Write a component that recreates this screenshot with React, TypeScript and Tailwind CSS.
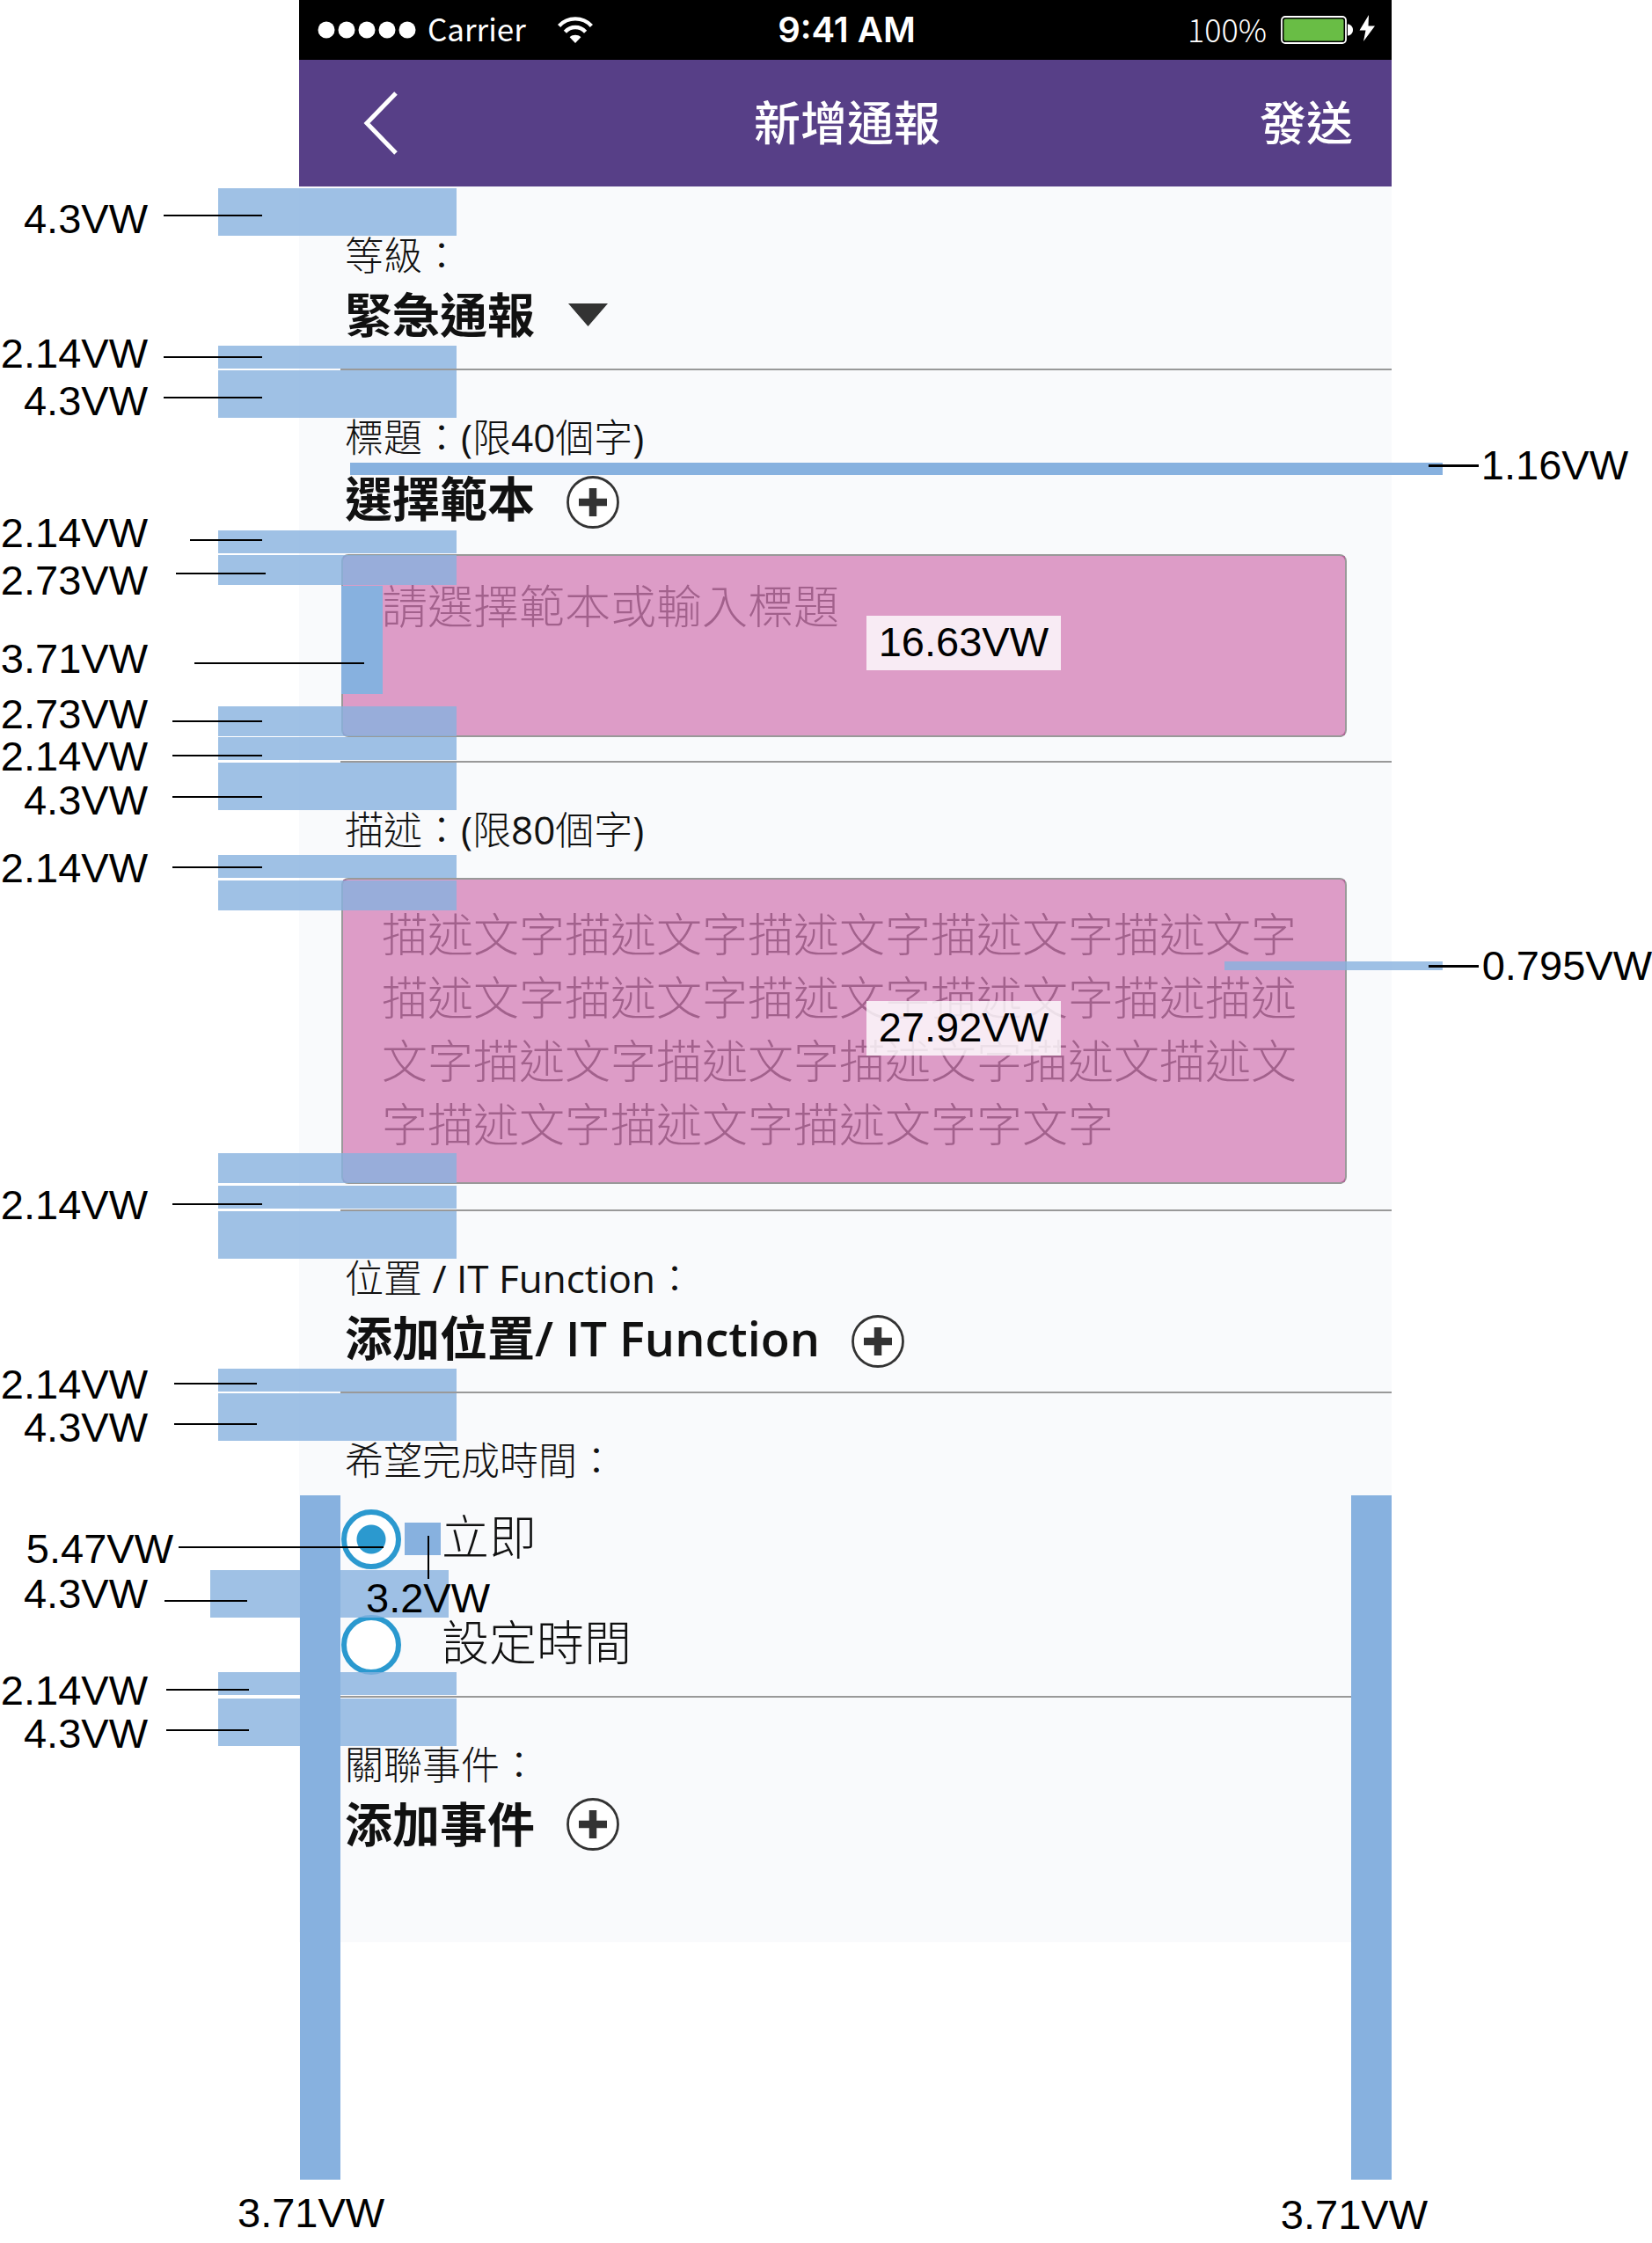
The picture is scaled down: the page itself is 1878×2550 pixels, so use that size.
import type { ReactNode } from "react";

const CJK = "font-['Open_Sans','Noto_Sans_CJK_TC',sans-serif]";

/* Translucent spacing bars over the left edge of the form. */
const bars = [
  "left-[248px] top-[214px] h-[54px]",
  "left-[248px] top-[393px] h-[26px]",
  "left-[248px] top-[421px] h-[54px]",
  "left-[248px] top-[603px] h-[26px]",
  "left-[248px] top-[631px] h-[34px]",
  "left-[248px] top-[803px] h-[34px]",
  "left-[248px] top-[838px] h-[26px]",
  "left-[248px] top-[867px] h-[54px]",
  "left-[248px] top-[972px] h-[26px]",
  "left-[248px] top-[1001px] h-[34px]",
  "left-[248px] top-[1311px] h-[34px]",
  "left-[248px] top-[1348px] h-[26px]",
  "left-[248px] top-[1377px] h-[54px]",
  "left-[248px] top-[1556px] h-[26px]",
  "left-[248px] top-[1584px] h-[54px]",
  "left-[239px] top-[1785px] h-[54px]",
  "left-[248px] top-[1901px] h-[26px]",
  "left-[248px] top-[1931px] h-[54px]",
];

/* Opaque padding and gap markers. */
const solids = [
  "left-[398px] right-[238px] top-[526px] h-[14px]",
  "left-[388px] top-[666px] h-[123px] w-[47px]",
  "left-[460px] top-[1731px] h-[37px] w-[41px]",
  "left-[341px] top-[1700px] h-[778px] w-[46px]",
  "right-[296px] top-[1700px] h-[778px] w-[46px]",
];

const leaders = [
  "left-[186px] top-[244px] w-[112px] h-0.5",
  "left-[186px] top-[405px] w-[112px] h-0.5",
  "left-[186px] top-[451px] w-[112px] h-0.5",
  "left-[216px] top-[613px] w-[82px] h-0.5",
  "left-[200px] top-[651px] w-[102px] h-0.5",
  "left-[221px] top-[753px] w-[193px] h-0.5",
  "left-[196px] top-[819px] w-[102px] h-0.5",
  "left-[196px] top-[858px] w-[102px] h-0.5",
  "left-[196px] top-[905px] w-[102px] h-0.5",
  "left-[196px] top-[985px] w-[102px] h-0.5",
  "left-[196px] top-[1368px] w-[102px] h-0.5",
  "left-[198px] top-[1572px] w-[94px] h-0.5",
  "left-[198px] top-[1618px] w-[94px] h-0.5",
  "left-[203px] top-[1758px] w-[233px] h-0.5",
  "left-[187px] top-[1819px] w-[94px] h-0.5",
  "left-[189px] top-[1920px] w-[94px] h-0.5",
  "left-[189px] top-[1966px] w-[94px] h-0.5",
  "left-[486px] top-[1746px] h-[49px] w-0.5",
  "right-[197px] top-[528px] w-[57px] h-[3px]",
  "right-[197px] top-[1097px] w-[57px] h-[3px]",
];

const labels: [string, string][] = [
  ["4.3VW", "left-0 w-[168px] top-[225px]"],
  ["2.14VW", "left-0 w-[168px] top-[378px]"],
  ["4.3VW", "left-0 w-[168px] top-[432px]"],
  ["2.14VW", "left-0 w-[168px] top-[582px]"],
  ["2.73VW", "left-0 w-[168px] top-[636px]"],
  ["3.71VW", "left-0 w-[168px] top-[725px]"],
  ["2.73VW", "left-0 w-[168px] top-[788px]"],
  ["2.14VW", "left-0 w-[168px] top-[836px]"],
  ["4.3VW", "left-0 w-[168px] top-[886px]"],
  ["2.14VW", "left-0 w-[168px] top-[963px]"],
  ["2.14VW", "left-0 w-[168px] top-[1346px]"],
  ["2.14VW", "left-0 w-[168px] top-[1550px]"],
  ["4.3VW", "left-0 w-[168px] top-[1599px]"],
  ["5.47VW", "left-0 w-[197px] top-[1737px]"],
  ["4.3VW", "left-0 w-[168px] top-[1788px]"],
  ["2.14VW", "left-0 w-[168px] top-[1898px]"],
  ["4.3VW", "left-0 w-[168px] top-[1947px]"],
  ["3.2VW", "left-[416px] top-[1793px]"],
  ["3.71VW", "left-[270px] top-[2492px]"],
  ["3.71VW", "right-[255px] top-[2494px]"],
  ["1.16VW", "right-[27px] top-[505px]"],
  ["0.795VW", "right-0 top-[1074px]"],
];

function Annotations() {
  return (
    <div className="pointer-events-none absolute inset-0">
      {bars.map((b) => (
        <div key={b} className={`absolute w-[271px] bg-[#87b1df]/80 ${b}`} />
      ))}
      <div className="absolute right-[238px] top-[1093px] h-[10px] w-[248px] bg-[#87b1df]/80" />
      {solids.map((s) => (
        <div key={s} className={`absolute bg-[#87b1df] ${s}`} />
      ))}
      {leaders.map((l) => (
        <div key={l} className={`absolute bg-black ${l}`} />
      ))}
      {labels.map(([text, place]) => (
        <span
          key={place}
          className={`absolute whitespace-nowrap text-right text-[47px] leading-12 text-black ${place}`}
        >
          {text}
        </span>
      ))}
    </div>
  );
}

function StatusBar() {
  return (
    <div className="grid h-[68px] grid-cols-3 items-center bg-black pl-[21px] pr-[18px] text-white">
      <div className="flex items-center">
        <svg width="113" height="20" viewBox="0 0 113 20" fill="#fff" aria-hidden="true">
          <circle cx="10" cy="10" r="9.5" />
          <circle cx="33" cy="10" r="9.5" />
          <circle cx="56" cy="10" r="9.5" />
          <circle cx="79" cy="10" r="9.5" />
          <circle cx="102" cy="10" r="9.5" />
        </svg>
        <span className="ml-3 pb-1 font-['Noto_Sans_CJK_TC',sans-serif] text-[35px] leading-10">Carrier</span>
        <svg className="ml-9" width="40" height="30" viewBox="0 0 40 30" aria-hidden="true">
          <g fill="none" stroke="#fff" strokeWidth="4.4">
            <path d="M1.6 10.4C11.5-.3 28.5-.3 38.4 10.4" />
            <path d="M8.4 17.2C15 10.3 25 10.3 31.6 17.2" />
          </g>
          <path d="M20 30l-6.4-6.8c3.6-3.2 9.2-3.2 12.8 0z" fill="#fff" />
        </svg>
      </div>
      <span className="text-center font-['Inter',sans-serif] text-[40px] font-semibold leading-10">9:41 AM</span>
      <div className="flex items-center justify-end">
        <span className="pb-1 font-['Noto_Sans_CJK_TC',sans-serif] text-[36px] font-light leading-10">100%</span>
        <svg className="ml-4" width="108" height="34" viewBox="0 0 108 34" aria-hidden="true">
          <rect x="1" y="2" width="73" height="30" rx="4" fill="none" stroke="#fff" strokeWidth="1.8" />
          <rect x="3.5" y="4.5" width="68" height="25" rx="2" fill="#69bd45" />
          <path d="M76 10.5c3 0 6 2.5 6 6.5s-3 6.5-6 6.5z" fill="#fff" />
          <path d="M100 0L89.5 17.5h7L94 30l13-17.5h-7.5z" fill="#fff" />
        </svg>
      </div>
    </div>
  );
}

function NavBar() {
  return (
    <header className="grid h-36 grid-cols-3 items-center bg-[#573f87] pl-12 pr-11 text-[53px] font-medium leading-[60px] text-white">
      <button type="button" aria-label="返回" className="ml-6 w-10">
        <svg width="40" height="72" viewBox="0 0 40 72" fill="none" stroke="#fff" strokeWidth="5" aria-hidden="true">
          <path d="M38 2L5 36L38 70" />
        </svg>
      </button>
      <h1 className="text-center">新增通報</h1>
      <button type="button" className="justify-self-end">發送</button>
    </header>
  );
}

function PlusIcon({ className = "" }: { className?: string }) {
  return (
    <svg className={className} width="60" height="60" viewBox="0 0 60 60" aria-hidden="true">
      <circle cx="30" cy="30" r="28.5" fill="#fff" stroke="#333" strokeWidth="2.8" />
      <path d="M30 14v32M14 30h32" stroke="#333" strokeWidth="8.5" />
    </svg>
  );
}

function AddButton({ children, icon = "" }: { children: ReactNode; icon?: string }) {
  return (
    <button type="button" className="flex h-15 items-center gap-9 pl-1 text-[54px] font-semibold leading-[60px]">
      {children}
      <PlusIcon className={icon} />
    </button>
  );
}

function Section({ children, className }: { children: ReactNode; className: string }) {
  return <section className={`pl-12 ${className}`}>{children}</section>;
}

const caption = "block pl-1 text-[44px] font-light leading-11";
const rule = "ml-[47px] h-0.5 border-0 bg-[#999]";

function Field({ size, children }: { size: string; children: ReactNode }) {
  return (
    <div className="relative mr-[51px] flex">
      {children}
      <div className="pointer-events-none absolute inset-0.5 bg-[#bb398f]/50" />
      <div className="pointer-events-none absolute inset-y-0 right-[325px] flex items-center pb-1.5">
        <span className="bg-white/80 px-3.5 pb-2 pt-1.5 font-['Liberation_Sans',Arial,sans-serif] text-[47px] leading-12 text-black">
          {size}
        </span>
      </div>
    </div>
  );
}

const area =
  "w-full resize-none overflow-hidden rounded-lg border-2 border-[#999] bg-white px-11 text-[52px] font-light leading-[72px] text-[#888] placeholder:text-[#888]";

function Choice({ id, label, checked = false }: { id: string; label: string; checked?: boolean }) {
  return (
    <div className="flex h-17 items-center gap-[46px]">
      <input
        id={id}
        type="radio"
        name="due"
        defaultChecked={checked}
        className="size-17 appearance-none rounded-full border-6 border-[#2b99cf] bg-white checked:bg-[radial-gradient(circle,#2b99cf_16px,#fff_17px)]"
      />
      <label htmlFor={id} className="pb-1.5 text-[54px] font-light leading-[60px]">
        {label}
      </label>
    </div>
  );
}

export default function App() {
  return (
    <div className="relative bg-white pb-[342px] pl-[340px] pr-[296px] font-['Liberation_Sans',Arial,sans-serif]">
      <main className={`bg-[#f9fafc] text-[#111] ${CJK}`}>
        <StatusBar />
        <NavBar />
        <form onSubmit={(e) => e.preventDefault()}>
          <Section className="pb-[31px] pt-14">
            <label htmlFor="level" className={caption}>等級：</label>
            <div className="mt-4 flex h-15 items-center gap-[38px] pl-1">
              <select id="level" className="appearance-none bg-transparent text-[54px] font-semibold leading-[60px]">
                <option>緊急通報</option>
              </select>
              <svg width="45" height="26" viewBox="0 0 45 26" aria-hidden="true">
                <path d="M0 0h45L22.5 26z" fill="#333" />
              </svg>
            </div>
          </Section>
          <hr className={rule} />

          <Section className="pb-[27px] pt-[54px]">
            <label htmlFor="title" className={caption}>
              標題：<span className="font-normal">(</span>限<span className="font-normal">40</span>個字<span className="font-normal">)</span>
            </label>
            <div className="mt-[18px]">
              <AddButton icon="mt-2">選擇範本</AddButton>
            </div>
            <div className="mt-[33px]">
              <Field size="16.63VW">
                <textarea id="title" className={`${area} h-52 pt-[21px]`} placeholder="請選擇範本或輸入標題" />
              </Field>
            </div>
          </Section>
          <hr className={rule} />

          <Section className="pb-[29px] pt-[54px]">
            <label htmlFor="description" className={caption}>
              描述：<span className="font-normal">(</span>限<span className="font-normal">80</span>個字<span className="font-normal">)</span>
            </label>
            <div className="mt-[33px]">
              <Field size="27.92VW">
                <textarea
                  id="description"
                  className={`${area} h-[348px] pt-[26px]`}
                  defaultValue="描述文字描述文字描述文字描述文字描述文字描述文字描述文字描述文字描述文字描述描述文字描述文字描述文字描述文字描述文描述文字描述文字描述文字描述文字字文字"
                />
              </Field>
            </div>
          </Section>
          <hr className={rule} />

          <Section className="pb-[31px] pt-[54px]">
            <h2 className={caption}>
              位置 <span className="font-normal">/ IT Function</span>：
            </h2>
            <div className="mt-4">
              <AddButton icon="mt-2">添加位置/ IT Function</AddButton>
            </div>
          </Section>
          <hr className={rule} />

          <Section className="pb-6 pt-[54px]">
            <fieldset>
              <legend className={caption}>希望完成時間：</legend>
              <div className="mt-[34px] flex flex-col gap-[52px]">
                <Choice id="due-now" label="立即" checked />
                <Choice id="due-set" label="設定時間" />
              </div>
            </fieldset>
          </Section>
          <hr className={rule} />

          <Section className="pb-[104px] pt-[54px]">
            <h2 className={caption}>關聯事件：</h2>
            <div className="mt-4">
              <AddButton>添加事件</AddButton>
            </div>
          </Section>
        </form>
      </main>
      <Annotations />
    </div>
  );
}
